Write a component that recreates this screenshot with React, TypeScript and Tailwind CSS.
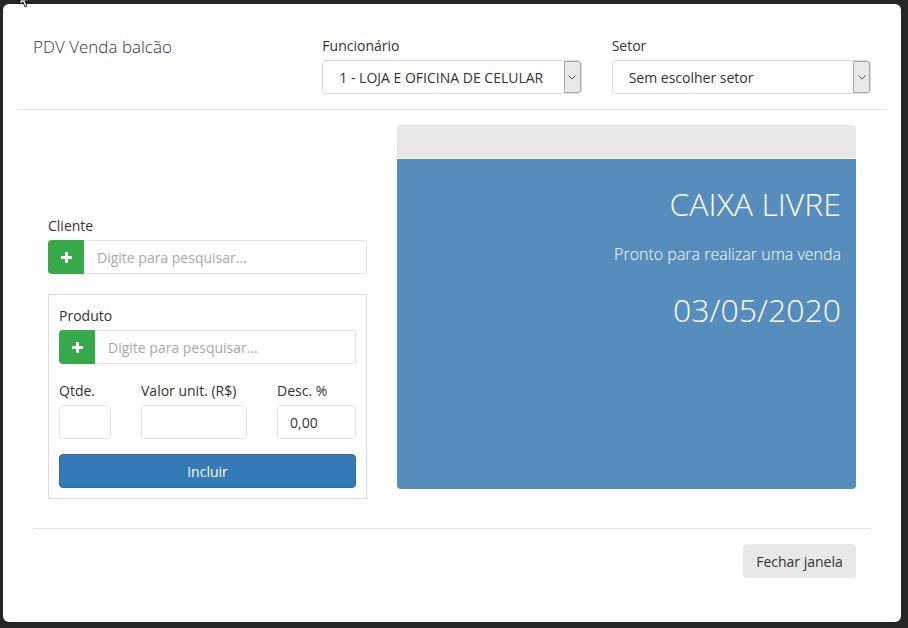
import React from 'react';

function Chevron() {
  return (
    <svg width="8" height="5" viewBox="0 0 8 5" fill="none">
      <path d="M0.5 0.5l3.5 3.5 3.5-3.5" stroke="#555" strokeWidth="1" />
    </svg>
  );
}

function Plus() {
  return (
    <svg width="11" height="11" viewBox="0 0 11 11">
      <rect x="4" y="0" width="3" height="11" fill="#fff" />
      <rect x="0" y="4" width="11" height="3" fill="#fff" />
    </svg>
  );
}

function FakeSelect({ value }: { value: string }) {
  return (
    <div className="h-[34px] flex items-stretch border border-[#dcdcdc] rounded-[4px] bg-white">
      <div className="flex-1 flex items-center pl-[16px] text-[14px] text-[#333] whitespace-nowrap overflow-hidden">{value}</div>
      <div className="w-[17px] border border-[#a8a8a8] bg-[#e9e9e9] rounded-r-[3px] flex items-center justify-center">
        <Chevron />
      </div>
    </div>
  );
}

function SearchGroup() {
  return (
    <div className="flex h-[34px]">
      <div className="w-[36px] bg-[#36a94a] rounded-l-[4px] flex items-center justify-center">
        <Plus />
      </div>
      <input
        className="flex-1 min-w-0 border border-l-0 border-[#e4e4e4] rounded-r-[2px] pl-[13px] text-[14px] outline-none placeholder:text-[#a9a9a9]"
        placeholder="Digite para pesquisar..."
      />
    </div>
  );
}

export default function App() {
  return (
    <div className="relative w-[908px] h-[628px] bg-[#262626] pt-[4px] pl-[3px] pr-[7px] pb-[6px] font-['Open_Sans','Liberation_Sans',sans-serif] text-[14px] text-[#333]">
      {/* mouse cursor tip */}
      <svg className="absolute left-[19px] top-0" width="14" height="8" viewBox="0 0 14 8">
        <path d="M1 0 L1 4 L4 2 L6 7 L8 6 L6 1 L10 1 L9 0 Z" fill="#fff" stroke="#000" strokeWidth="0.8" />
      </svg>

      <div className="h-full bg-white rounded-[6px] flex flex-col">
        {/* header */}
        <div className="mx-[15px] px-[15px] pt-[32px] pb-[15px] border-b border-[#e5e5e5] grid grid-cols-3 gap-x-[30px]">
          <div className="text-[17px] leading-[22px] font-light text-[#333]">PDV Venda balcão</div>
          <div>
            <div className="leading-[20px] mb-[4px]">Funcionário</div>
            <FakeSelect value="1 - LOJA E OFICINA DE CELULAR" />
          </div>
          <div>
            <div className="leading-[20px] mb-[4px]">Setor</div>
            <FakeSelect value="Sem escolher setor" />
          </div>
        </div>

        {/* body */}
        <div className="mx-[15px] px-[30px] pt-[15px] flex gap-[30px]">
          <div className="w-[319px] pt-[91px]">
            <div className="leading-[20px] mb-[4px]">Cliente</div>
            <SearchGroup />

            <div className="mt-[20px] border border-[#dddddd] px-[10px] pt-[11px] pb-[10px]">
              <div className="leading-[20px] mb-[4px]">Produto</div>
              <SearchGroup />

              <div className="flex gap-[30px] mt-[17px]">
                <div className="w-[52px]">
                  <div className="leading-[20px] mb-[4px] whitespace-nowrap">Qtde.</div>
                  <input className="w-full h-[34px] border border-[#e4e4e4] rounded-[4px] px-[12px] outline-none" />
                </div>
                <div className="w-[106px]">
                  <div className="leading-[20px] mb-[4px] whitespace-nowrap">Valor unit. (R$)</div>
                  <input className="w-full h-[34px] border border-[#e4e4e4] rounded-[4px] px-[12px] outline-none" />
                </div>
                <div className="w-[79px]">
                  <div className="leading-[20px] mb-[4px] whitespace-nowrap">Desc. %</div>
                  <input
                    className="w-full h-[34px] border border-[#e4e4e4] rounded-[4px] px-[12px] text-[#333] outline-none"
                    defaultValue="0,00"
                  />
                </div>
              </div>

              <button className="mt-[15px] w-full h-[34px] bg-[#337ab7] border border-[#2e6da4] rounded-[4px] text-white text-[14px]">
                Incluir
              </button>
            </div>
          </div>

          <div className="w-[459px]">
            <div className="h-[33px] bg-[#e8e8e8] rounded-t-[4px]" />
            <div className="mt-[1px] h-[330px] bg-[#578dbd] rounded-b-[4px] px-[15px] pt-[25px] text-right text-white">
              <div className="text-[32px] leading-[40px] font-light">CAIXA LIVRE</div>
              <div className="mt-[19px] text-[16px] leading-[22px] font-light">Pronto para realizar uma venda</div>
              <div className="mt-[25px] text-[32px] leading-[40px] font-light">03/05/2020</div>
            </div>
          </div>
        </div>

        {/* footer */}
        <div className="mx-[30px] mt-[29px] border-t border-[#e5e5e5] pt-[15px] pr-[15px] flex justify-end">
          <button className="w-[113px] h-[34px] bg-[#e8e8e8] rounded-[4px] text-[14px] text-[#333]">Fechar janela</button>
        </div>
      </div>
    </div>
  );
}
